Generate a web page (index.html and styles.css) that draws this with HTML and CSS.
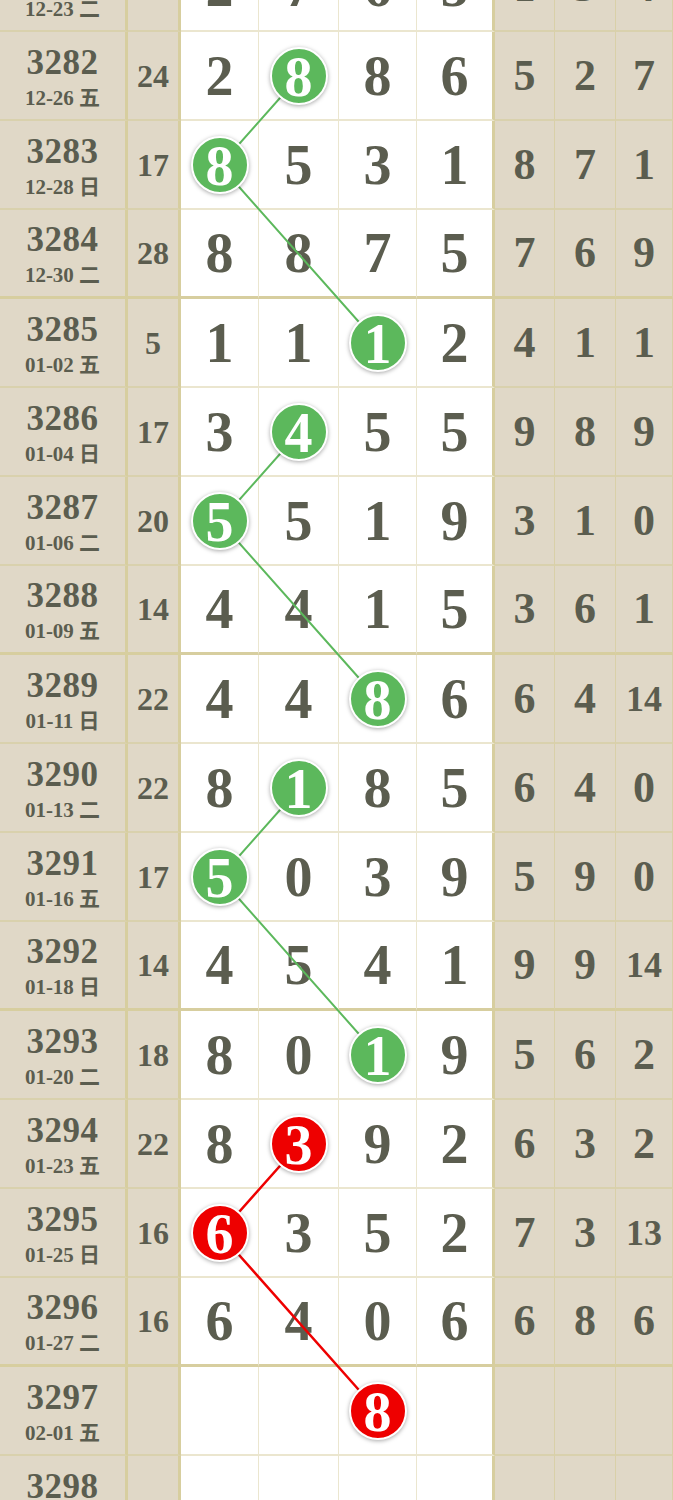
FILE: index.html
```html
<!DOCTYPE html>
<html lang="zh">
<head>
    <meta charset="UTF-8">
    <meta name="viewport" content="width=device-width, initial-scale=1.0">
    <title>走势图</title>
    <link rel="stylesheet" href="styles.css">
</head>
<body>
    <div class="chart">
        <svg class="links" width="673" height="1560" viewBox="0 0 673 1560">
            <polyline class="green" points="299,133.5 220,222.5 378,400.5"/>
            <polyline class="green" points="299,489.5 220,578.5 378,756.5"/>
            <polyline class="green" points="299,845.5 220,934.5 378,1112.5"/>
            <polyline class="red" points="299,1201.5 220,1290.5 378,1468.5"/>
        </svg>

        <div class="row">
            <div class="cell period"><b>3281</b><span>12-23 二</span></div>
            <div class="cell sum"></div>
            <div class="cell num">2</div><div class="cell num">7</div><div class="cell num">6</div><div class="cell num last">5</div>
            <div class="cell tail">1</div><div class="cell tail">3</div><div class="cell tail">4</div>
        </div>
        <div class="row end">
            <div class="cell period"><b>3282</b><span>12-26 五</span></div>
            <div class="cell sum">24</div>
            <div class="cell num">2</div><div class="cell num"><span class="ball green">8</span></div><div class="cell num">8</div><div class="cell num last">6</div>
            <div class="cell tail">5</div><div class="cell tail">2</div><div class="cell tail">7</div>
        </div>
        <div class="row">
            <div class="cell period"><b>3283</b><span>12-28 日</span></div>
            <div class="cell sum">17</div>
            <div class="cell num"><span class="ball green">8</span></div><div class="cell num">5</div><div class="cell num">3</div><div class="cell num last">1</div>
            <div class="cell tail">8</div><div class="cell tail">7</div><div class="cell tail">1</div>
        </div>
        <div class="row group-end">
            <div class="cell period"><b>3284</b><span>12-30 二</span></div>
            <div class="cell sum">28</div>
            <div class="cell num">8</div><div class="cell num">8</div><div class="cell num">7</div><div class="cell num last">5</div>
            <div class="cell tail">7</div><div class="cell tail">6</div><div class="cell tail">9</div>
        </div>
        <div class="row">
            <div class="cell period"><b>3285</b><span>01-02 五</span></div>
            <div class="cell sum">5</div>
            <div class="cell num">1</div><div class="cell num">1</div><div class="cell num"><span class="ball green">1</span></div><div class="cell num last">2</div>
            <div class="cell tail">4</div><div class="cell tail">1</div><div class="cell tail">1</div>
        </div>
        <div class="row">
            <div class="cell period"><b>3286</b><span>01-04 日</span></div>
            <div class="cell sum">17</div>
            <div class="cell num">3</div><div class="cell num"><span class="ball green">4</span></div><div class="cell num">5</div><div class="cell num last">5</div>
            <div class="cell tail">9</div><div class="cell tail">8</div><div class="cell tail">9</div>
        </div>
        <div class="row">
            <div class="cell period"><b>3287</b><span>01-06 二</span></div>
            <div class="cell sum">20</div>
            <div class="cell num"><span class="ball green">5</span></div><div class="cell num">5</div><div class="cell num">1</div><div class="cell num last">9</div>
            <div class="cell tail">3</div><div class="cell tail">1</div><div class="cell tail">0</div>
        </div>
        <div class="row group-end">
            <div class="cell period"><b>3288</b><span>01-09 五</span></div>
            <div class="cell sum">14</div>
            <div class="cell num">4</div><div class="cell num">4</div><div class="cell num">1</div><div class="cell num last">5</div>
            <div class="cell tail">3</div><div class="cell tail">6</div><div class="cell tail">1</div>
        </div>
        <div class="row">
            <div class="cell period"><b>3289</b><span>01-11 日</span></div>
            <div class="cell sum">22</div>
            <div class="cell num">4</div><div class="cell num">4</div><div class="cell num"><span class="ball green">8</span></div><div class="cell num last">6</div>
            <div class="cell tail">6</div><div class="cell tail">4</div><div class="cell tail small">14</div>
        </div>
        <div class="row">
            <div class="cell period"><b>3290</b><span>01-13 二</span></div>
            <div class="cell sum">22</div>
            <div class="cell num">8</div><div class="cell num"><span class="ball green">1</span></div><div class="cell num">8</div><div class="cell num last">5</div>
            <div class="cell tail">6</div><div class="cell tail">4</div><div class="cell tail">0</div>
        </div>
        <div class="row">
            <div class="cell period"><b>3291</b><span>01-16 五</span></div>
            <div class="cell sum">17</div>
            <div class="cell num"><span class="ball green">5</span></div><div class="cell num">0</div><div class="cell num">3</div><div class="cell num last">9</div>
            <div class="cell tail">5</div><div class="cell tail">9</div><div class="cell tail">0</div>
        </div>
        <div class="row group-end">
            <div class="cell period"><b>3292</b><span>01-18 日</span></div>
            <div class="cell sum">14</div>
            <div class="cell num">4</div><div class="cell num">5</div><div class="cell num">4</div><div class="cell num last">1</div>
            <div class="cell tail">9</div><div class="cell tail">9</div><div class="cell tail small">14</div>
        </div>
        <div class="row">
            <div class="cell period"><b>3293</b><span>01-20 二</span></div>
            <div class="cell sum">18</div>
            <div class="cell num">8</div><div class="cell num">0</div><div class="cell num"><span class="ball green">1</span></div><div class="cell num last">9</div>
            <div class="cell tail">5</div><div class="cell tail">6</div><div class="cell tail">2</div>
        </div>
        <div class="row">
            <div class="cell period"><b>3294</b><span>01-23 五</span></div>
            <div class="cell sum">22</div>
            <div class="cell num">8</div><div class="cell num"><span class="ball red">3</span></div><div class="cell num">9</div><div class="cell num last">2</div>
            <div class="cell tail">6</div><div class="cell tail">3</div><div class="cell tail">2</div>
        </div>
        <div class="row">
            <div class="cell period"><b>3295</b><span>01-25 日</span></div>
            <div class="cell sum">16</div>
            <div class="cell num"><span class="ball red">6</span></div><div class="cell num">3</div><div class="cell num">5</div><div class="cell num last">2</div>
            <div class="cell tail">7</div><div class="cell tail">3</div><div class="cell tail small">13</div>
        </div>
        <div class="row group-end">
            <div class="cell period"><b>3296</b><span>01-27 二</span></div>
            <div class="cell sum">16</div>
            <div class="cell num">6</div><div class="cell num">4</div><div class="cell num">0</div><div class="cell num last">6</div>
            <div class="cell tail">6</div><div class="cell tail">8</div><div class="cell tail">6</div>
        </div>
        <div class="row">
            <div class="cell period"><b>3297</b><span>02-01 五</span></div>
            <div class="cell sum"></div>
            <div class="cell num"></div><div class="cell num"></div><div class="cell num"><span class="ball red">8</span></div><div class="cell num last"></div>
            <div class="cell tail"></div><div class="cell tail"></div><div class="cell tail"></div>
        </div>
        <div class="row">
            <div class="cell period"><b>3298</b><span>02-03 日</span></div>
            <div class="cell sum"></div>
            <div class="cell num"></div><div class="cell num"></div><div class="cell num"></div><div class="cell num last"></div>
            <div class="cell tail"></div><div class="cell tail"></div><div class="cell tail"></div>
        </div>
    </div>
</body>
</html>
```

FILE: styles.css
```css
* {
    box-sizing: border-box;
    margin: 0;
    padding: 0;
}
body {
    font-family: "Liberation Serif", "Noto Sans CJK SC", serif;
    font-weight: 700;
    color: #5b5d4f;
    background: #fff;
    width: 673px;
    overflow: hidden;
}
.chart {
    position: relative;
    margin-top: -57px;
}
.links {
    position: absolute;
    top: 0;
    left: 0;
    z-index: 1;
    pointer-events: none;
}
.links polyline {
    fill: none;
    stroke-width: 2;
}
.links .green {
    stroke: #5cb85c;
}
.links .red {
    stroke: #ee0000;
    stroke-width: 2.5;
}
.row {
    display: grid;
    grid-template-columns: 128px 53px 78px 80px 78px 78px 60px 61px 57px;
    height: 89px;
}
.cell {
    display: flex;
    align-items: center;
    justify-content: center;
    border-bottom: 2px solid #ebe6cf;
    border-right: 1px solid #ebe6cf;
    line-height: 1;
}
.period, .sum, .tail {
    background: #e0d8c7;
    border-bottom-color: #d9d1ad;
}
.tail {
    border-right-color: #d9d0a8;
}
.period, .sum {
    border-right: 3px solid #d7ce9f;
}
.num.last {
    border-right: 3px solid #d7ce9f;
}
.row.group-end .cell {
    border-bottom: 3px solid #d7ce9f;
}
.period {
    flex-direction: column;
    gap: 8px;
    padding-top: 2px;
}
.period b {
    font-size: 35px;
    letter-spacing: 0.5px;
}
.period span {
    font-size: 21px;
}
.sum {
    font-size: 32px;
}
.num {
    font-size: 56px;
    background: #fff;
}
.tail {
    font-size: 44px;
}
.tail.small {
    font-size: 36px;
}
.ball {
    position: relative;
    z-index: 2;
    display: flex;
    align-items: center;
    justify-content: center;
    width: 58px;
    height: 58px;
    border-radius: 50%;
    border: 2px solid #fff;
    color: #fff;
    font-size: 56px;
    padding-top: 2px;
    box-shadow: 0 1px 4px rgba(0, 0, 0, 0.35);
}
.ball.green {
    background: #5cb85c;
}
.ball.red {
    background: #ee0000;
}
```
